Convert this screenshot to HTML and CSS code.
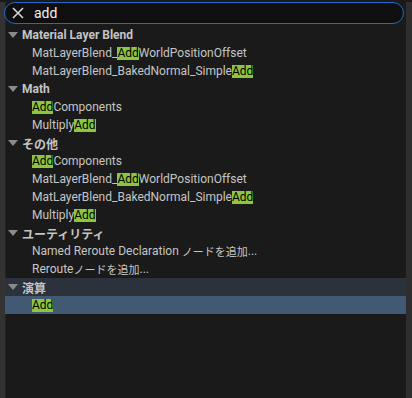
FILE: index.html
```html
<!DOCTYPE html>
<html lang="ja">
<head>
    <meta charset="UTF-8">
    <title>Action Menu</title>
    <link rel="stylesheet" href="styles.css">
</head>
<body>
    <div class="menu">
        <div class="search">
            <svg class="clear" width="12" height="12" viewBox="0 0 12 12">
                <path d="M1 1 L11 11 M11 1 L1 11" stroke="#d8d8d8" stroke-width="1.6" fill="none"/>
            </svg>
            <span class="query">add</span>
        </div>
        <div class="list">
            <div class="row cat"><span class="arrow"></span>Material Layer Blend</div>
            <div class="row item">MatLayerBlend_<mark>Add</mark>WorldPositionOffset</div>
            <div class="row item">MatLayerBlend_BakedNormal_Simple<mark>Add</mark></div>
            <div class="row cat"><span class="arrow"></span>Math</div>
            <div class="row item"><mark>Add</mark>Components</div>
            <div class="row item">Multiply<mark>Add</mark></div>
            <div class="row cat"><span class="arrow"></span>その他</div>
            <div class="row item"><mark>Add</mark>Components</div>
            <div class="row item">MatLayerBlend_<mark>Add</mark>WorldPositionOffset</div>
            <div class="row item">MatLayerBlend_BakedNormal_Simple<mark>Add</mark></div>
            <div class="row item">Multiply<mark>Add</mark></div>
            <div class="row cat"><span class="arrow"></span>ユーティリティ</div>
            <div class="row item">Named Reroute Declaration&nbsp;<span class="jp">ノードを追加</span>...</div>
            <div class="row item">Reroute<span class="jp">ノードを追加</span>...</div>
            <div class="row cat hover"><span class="arrow"></span>演算</div>
            <div class="row item selected"><mark>Add</mark></div>
        </div>
    </div>
</body>
</html>
```

FILE: styles.css
```css
body {
    margin: 0;
    background: #1a1a1a;
    font-family: Roboto, "Noto Sans CJK JP", sans-serif;
}
.menu {
    width: 412px;
    height: 398px;
    box-sizing: border-box;
    background: #1a1a1a;
    border-left: 5px solid #333333;
    border-right: 6px solid #2e2e2e;
    box-shadow: inset 1px 0 0 #242424;
}
.search {
    margin: 2px 0 0 -1px;
    width: 400px;
    height: 22px;
    box-sizing: border-box;
    background: #0f0f0f;
    border: 1.5px solid #1f68cc;
    border-radius: 12px;
    display: flex;
    align-items: center;
    color: #f0f0f0;
}
.clear {
    margin-left: 7px;
}
.query {
    margin-left: 10px;
    font-size: 14px;
}
.list {
    margin-top: 2px;
}
.row {
    height: 18px;
    display: flex;
    align-items: center;
    font-size: 12px;
    white-space: nowrap;
}
.cat {
    padding-left: 3px;
    font-weight: bold;
    color: #c4c4c4;
}
.arrow {
    width: 0;
    height: 0;
    border-left: 5px solid transparent;
    border-right: 5px solid transparent;
    border-top: 6px solid #8a8a8a;
    margin-right: 4px;
}
.item {
    padding-left: 27px;
    color: #c6c6c6;
}
.jp {
    font-size: 11px;
}
mark {
    background: #8cc63f;
    color: #000;
    line-height: 13px;
}
.hover {
    background: #2b323c;
}
.selected {
    background: #415973;
}
```
